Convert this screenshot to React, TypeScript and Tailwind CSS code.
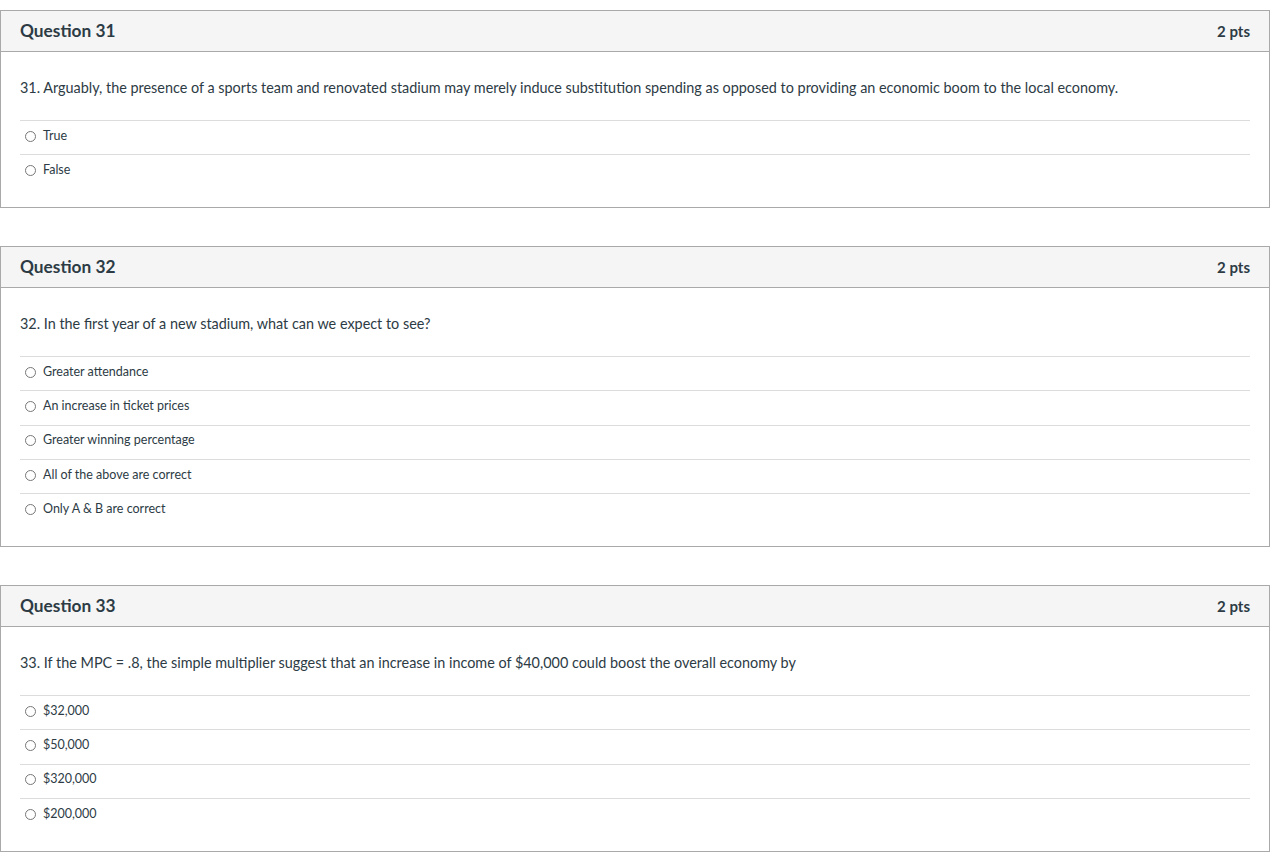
import React from "react";

type Q = { title: string; text: string; options: string[] };

const questions: Q[] = [
  {
    title: "Question 31",
    text: "31. Arguably, the presence of a sports team and renovated stadium may merely induce substitution spending as opposed to providing an economic boom to the local economy.",
    options: ["True", "False"],
  },
  {
    title: "Question 32",
    text: "32. In the first year of a new stadium, what can we expect to see?",
    options: [
      "Greater attendance",
      "An increase in ticket prices",
      "Greater winning percentage",
      "All of the above are correct",
      "Only A & B are correct",
    ],
  },
  {
    title: "Question 33",
    text: "33. If the MPC = .8, the simple multiplier suggest that an increase in income of $40,000 could boost the overall economy by",
    options: ["$32,000", "$50,000", "$320,000", "$200,000"],
  },
];

function Card({ q }: { q: Q }) {
  return (
    <div className="border border-[#a9a9a9] bg-white">
      <div className="h-[41px] bg-[#f5f5f5] border-b border-[#a9a9a9] px-[19px] flex items-center justify-between text-[#2d3b45]">
        <span className="text-[17.3px] font-bold">{q.title}</span>
        <span className="text-[15px] font-bold">2 pts</span>
      </div>
      <div className="px-[19px] pt-[26px] pb-[18.5px]">
        <div className="text-[14.4px] leading-[20px] text-[#2d3b45]">{q.text}</div>
        <div className="mt-[22px]">
          {q.options.map((o) => (
            <div key={o} className="h-[34.3px] border-t border-[#dcdcdc] flex items-center pb-[3px]">
              <span className="ml-[5px] w-[11px] h-[11px] rounded-full border border-[#777] bg-white" />
              <span className="ml-[7px] text-[12.5px] text-[#2d3b45]">{o}</span>
            </div>
          ))}
        </div>
      </div>
    </div>
  );
}

export default function App() {
  return (
    <div
      className="bg-white pt-[10px] pr-[12px] flex flex-col gap-[38px] min-h-[862px]"
      style={{ fontFamily: "Lato, 'Liberation Sans', sans-serif" }}
    >
      {questions.map((q) => (
        <Card key={q.title} q={q} />
      ))}
    </div>
  );
}
